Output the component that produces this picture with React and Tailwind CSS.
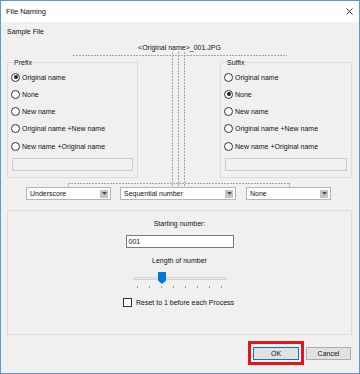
const options = [
  "Original name",
  "None",
  "New name",
  "Original name +New name",
  "New name +Original name",
];

function Radio({ label, checked }) {
  return (
    <div className="flex h-[17.25px] items-center gap-[2px] pl-[3px]">
      <span className="flex h-[9px] w-[9px] items-center justify-center rounded-full border border-[#333] bg-white">
        {checked && <span className="h-[4px] w-[4px] rounded-full bg-[#222]" />}
      </span>
      <span>{label}</span>
    </div>
  );
}

function GroupBox({ title, selected, className }) {
  return (
    <div className={`relative h-[116px] border border-[#dcdcdc] pt-[5.4px] ${className}`}>
      <span className="absolute -top-[4px] left-[5px] bg-[#f0f0f0] px-[1px] leading-[7px]">
        {title}
      </span>
      {options.map((label) => (
        <Radio key={label} label={label} checked={label === selected} />
      ))}
      <div className="mx-[4px] mt-[3.5px] h-[13px] border border-[#cccccc] bg-[#f0f0f0]" />
    </div>
  );
}

function Combo({ value, className }) {
  return (
    <div
      className={`flex h-[13px] items-center justify-between border border-[#b4b4b4] bg-white pl-[3px] pr-[2px] ${className}`}
    >
      <span>{value}</span>
      <span className="flex h-[8px] w-[8px] items-center justify-center bg-[#c4c4c4]">
        <svg width="5" height="3" viewBox="0 0 5 3">
          <path d="M0 0H5L2.5 3Z" fill="#505050" />
        </svg>
      </span>
    </div>
  );
}

const dotsH = "bg-[repeating-linear-gradient(90deg,#a4a4a4_0_2px,transparent_2px_3px)]";
const dotsV = "bg-[repeating-linear-gradient(180deg,#a4a4a4_0_2px,transparent_2px_3px)]";

export default function App() {
  return (
    <div className="flex h-[374px] w-[360px] flex-col border border-[#5b9bd5] bg-[#f0f0f0] font-['Liberation_Sans',Arial,sans-serif] text-[7px] leading-none text-[#111]">
      <div className="flex h-[21px] items-center justify-between bg-white pl-[5px] pr-[6px]">
        <span className="text-[7.5px]">File Naming</span>
        <svg width="7" height="7" viewBox="0 0 7 7">
          <path d="M0.5 0.5L6.5 6.5M6.5 0.5L0.5 6.5" stroke="#222" strokeWidth="0.9" />
        </svg>
      </div>

      <div className="relative flex flex-1 flex-col pl-[6px] pr-[7px]">
        <div className="mt-[4px] flex h-[10px] items-center">Sample File</div>
        <div className="mt-[6px] flex h-[10px] items-center justify-center">
          &lt;Original name&gt;_001.JPG
        </div>

        {/* naming diagram lines */}
        <span className={`absolute left-[72px] top-[33px] h-px w-[214px] ${dotsH}`} />
        <span className={`absolute left-[171px] top-[30px] h-[135px] w-px ${dotsV}`} />
        <span className={`absolute left-[177px] top-[30px] h-[135px] w-px ${dotsV}`} />
        <span className={`absolute left-[183px] top-[30px] h-[135px] w-px ${dotsV}`} />
        <span className={`absolute left-[67px] top-[161px] h-px w-[221px] ${dotsH}`} />
        <span className={`absolute left-[67px] top-[161px] h-[4px] w-px ${dotsV}`} />
        <span className={`absolute left-[288px] top-[161px] h-[4px] w-px ${dotsV}`} />

        <div className="mt-[10px] flex justify-between">
          <GroupBox title="Prefix" selected="Original name" className="w-[131px]" />
          <GroupBox title="Suffix" selected="None" className="w-[132px]" />
        </div>

        <div className="mt-[9px] flex">
          <Combo value="Underscore" className="ml-[19px] w-[85px]" />
          <Combo value="Sequential number" className="ml-[9px] w-[116px]" />
          <Combo value="None" className="ml-[10px] w-[85px]" />
        </div>

        <div className="mt-[10px] flex h-[125px] flex-col items-center border border-[#dcdcdc] pt-[7px]">
          <div className="flex h-[10px] items-center">Starting number:</div>
          <div className="mt-[7px] flex h-[13px] w-[108px] items-center border border-[#7a7a7a] bg-white pl-[2px]">
            001
          </div>
          <div className="mt-[7px] flex h-[10px] items-center">Length of number</div>

          <div className="relative mt-[5px] h-[20px] w-[94px]">
            <span className="absolute left-0 right-0 top-[7px] h-[3px] border border-[#d6d6d6] bg-[#e7e7e7]" />
            <svg className="absolute left-[25px] top-[2px]" width="8" height="12" viewBox="0 0 8 12">
              <path d="M0 0H8V8.5L4 12L0 8.5Z" fill="#0078d7" />
            </svg>
            <div className="absolute left-0 right-0 top-[16px] flex justify-between px-[4px]">
              {[0, 1, 2, 3, 4, 5, 6, 7].map((i) => (
                <span key={i} className="h-[2px] w-px bg-[#9a9a9a]" />
              ))}
            </div>
          </div>

          <div className="mt-[8px] flex items-center gap-[4px] pr-[2px]">
            <span className="h-[9px] w-[9px] border border-[#333] bg-white" />
            <span>Reset to 1 before each Process</span>
          </div>
        </div>

        <div className="mt-[12px] flex justify-end gap-[7px] pr-[1px]">
          <div className="relative">
            <button
              type="button"
              className="flex h-[13px] w-[46px] items-center justify-center border border-[#0078d7] bg-[#e1e1e1]"
            >
              OK
            </button>
            <span className="absolute -bottom-[5px] -left-[5px] -right-[5px] -top-[6px] border-[3px] border-[#e8141c]" />
          </div>
          <button
            type="button"
            className="flex h-[13px] w-[45px] items-center justify-center border border-[#adadad] bg-[#e1e1e1]"
          >
            Cancel
          </button>
        </div>
      </div>
    </div>
  );
}
